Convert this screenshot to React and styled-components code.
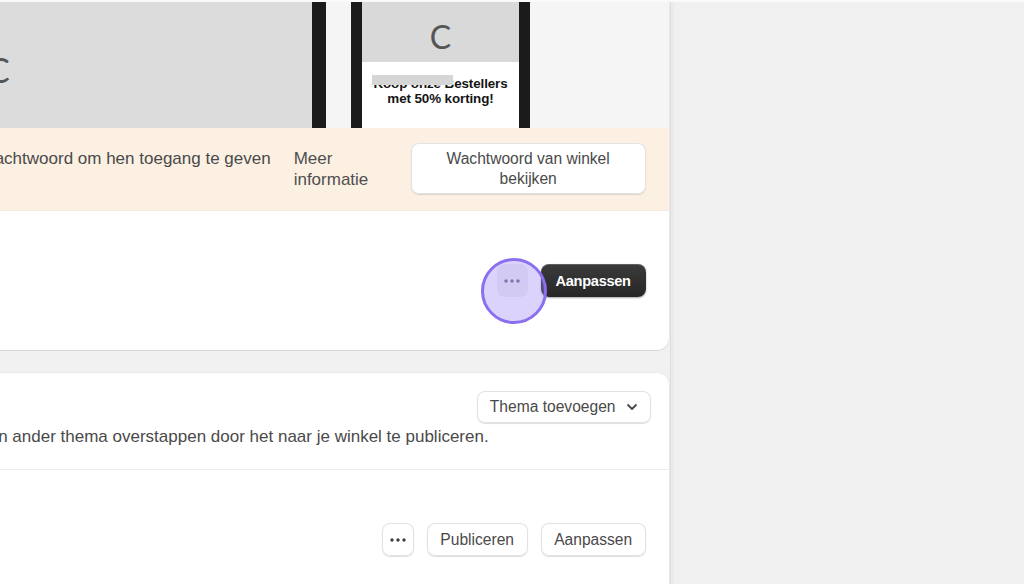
import React from 'react';
import styled, { createGlobalStyle } from 'styled-components';

const GlobalStyle = createGlobalStyle`
  html, body {
    margin: 0;
    padding: 0;
    background: #f1f1f1;
    font-family: "Liberation Sans", Arial, sans-serif;
    overflow: hidden;
  }
  * { box-sizing: border-box; }
`;

const Shell = styled.div`
  display: flex;
  height: 100vh;
  border-top: 2px solid #fafafa;
  overflow: hidden;
`;

// the page is scrolled sideways, so the column starts left of the viewport
const Main = styled.main`
  flex: 0 0 808px;
  margin-left: -139px;
  padding-right: 1px;
  display: flex;
  flex-direction: column;
  gap: 23px;
`;

const Rule = styled.div`
  flex: 0 0 1px;
  background: #dddddd;
`;

const Rest = styled.div`
  flex: 1;
  background: #f0f0f0;
  border-left: 3px solid #ebebeb;
`;

const Card = styled.section`
  background: #fff;
  border-radius: ${p => (p.$flatTop ? '0 0 12px 12px' : '12px')};
  box-shadow: 0 1px 0 rgba(26, 26, 26, 0.08), 0 0 0 1px rgba(0, 0, 0, 0.03);
  overflow: hidden;
  flex-shrink: 0;
`;

/* preview with desktop + phone mockups */
const Preview = styled.div`
  height: 126px;
  background: #f5f5f5;
  display: flex;
  padding-left: 20px;
  gap: 25px;
`;

const Desktop = styled.div`
  width: 445px;
  display: flex;
`;

const DesktopScreen = styled.div`
  flex: 1;
  background: #dcdcdc;
  display: flex;
  align-items: center;
  padding: 10px 0 0 106px;
`;

const DesktopFrame = styled.div`
  width: 14px;
  background: #1b1b1b;
`;

const LogoC = styled.span`
  font-family: Lato, "Open Sans", sans-serif;
  font-weight: 400;
  font-size: ${p => p.$size}px;
  line-height: 1;
  color: #555555;
`;

const Phone = styled.div`
  width: 179px;
  border-left: 11px solid #1b1b1b;
  border-right: 11px solid #1b1b1b;
  display: flex;
  flex-direction: column;
`;

const PhoneTop = styled.div`
  height: 60px;
  padding-top: 10px;
  background: #d9d9d9;
  display: flex;
  align-items: center;
  justify-content: center;
`;

const PhoneBody = styled.div`
  flex: 1;
  background: #fff;
  padding-top: 14px;
  position: relative;
`;

const Promo = styled.div`
  font-weight: 700;
  font-size: 13.4px;
  line-height: 15px;
  color: #151515;
  text-align: center;
  letter-spacing: -0.1px;
`;

const Redact = styled.div`
  position: absolute;
  left: 10px;
  top: 13px;
  width: 81px;
  height: 10px;
  background: #d6d6d6;
  filter: blur(0.6px);
`;

/* password banner */
const Banner = styled.div`
  background: #fcf0e3;
  padding: 15px 23px 16px 25px;
  border-bottom: 1px solid #f3e8dc;
  display: flex;
  align-items: center;
`;

const BannerText = styled.p`
  flex: 1;
  margin: 0;
  font-size: 17px;
  line-height: 21px;
  color: #4a4a4a;
  white-space: nowrap;
`;

const MoreLink = styled.a`
  width: 95px;
  margin-left: 23px;
  margin-right: 22px;
  font-size: 17px;
  line-height: 21px;
  color: #4f4f4f;
`;

const Button = styled.button`
  height: ${p => p.$h || 33}px;
  width: ${p => p.$w}px;
  padding: 0;
  border: 0;
  border-radius: 8px;
  background: #fff;
  box-shadow: inset 0 0 0 1px #e2e2e2, 0 1px 1px rgba(0, 0, 0, 0.13);
  font-family: "Liberation Sans", Arial, sans-serif;
  font-size: 15.6px;
  line-height: 20px;
  color: #4a4a4a;
  display: flex;
  align-items: center;
  justify-content: center;
  gap: 10px;
  cursor: pointer;
`;

const WideButton = styled(Button)`
  padding: 0 30px;
  text-align: center;
`;

const DarkButton = styled(Button)`
  background: linear-gradient(#3b3b3b, #262626);
  color: #fff;
  font-weight: 700;
  font-size: 14.6px;
  letter-spacing: -0.3px;
  box-shadow: inset 0 1px 0 rgba(255, 255, 255, 0.18), 0 1px 2px rgba(0, 0, 0, 0.35);
`;

const GhostButton = styled(Button)`
  background: #f1f1f1;
  box-shadow: none;
  position: relative;
`;

const ClickRing = styled.span`
  position: absolute;
  left: -16px;
  top: -6px;
  width: 66px;
  height: 66px;
  border-radius: 50%;
  background: rgba(157, 133, 247, 0.36);
  border: 3px solid #8c6ff0;
  pointer-events: none;
`;

/* theme rows */
const ThemeRow = styled.div`
  height: 139px;
  display: flex;
  align-items: center;
  justify-content: space-between;
  padding: 0 23px 0 20px;
`;

const ThemeName = styled.div`
  font-size: 15px;
  font-weight: 700;
  color: #303030;
`;

const Actions = styled.div`
  display: flex;
  gap: 13px;
`;

const LibraryHeader = styled.div`
  padding: 18px 18px 22px 20px;
  border-bottom: 1px solid #ebebeb;
`;

const HeaderTop = styled.div`
  display: flex;
  align-items: center;
  justify-content: space-between;
`;

const Title = styled.h2`
  margin: 0;
  font-size: 16px;
  color: #303030;
`;

const Description = styled.p`
  margin: 4px 0 0;
  font-size: 17px;
  line-height: 20px;
  color: #4a4a4a;
  white-space: nowrap;
`;

const Dots = ({ color = '#3f3f3f' }) => (
  <svg width="16" height="4" viewBox="0 0 16 4">
    <circle cx="2" cy="2" r="1.7" fill={color} />
    <circle cx="8" cy="2" r="1.7" fill={color} />
    <circle cx="14" cy="2" r="1.7" fill={color} />
  </svg>
);

const Chevron = () => (
  <svg width="12" height="8" viewBox="0 0 12 8">
    <path d="M2 2l4 4 4-4" fill="none" stroke="#4a4a4a" strokeWidth="1.8" strokeLinecap="round" strokeLinejoin="round" />
  </svg>
);

export default function App() {
  return (
    <>
      <GlobalStyle />
      <Shell>
        <Main>
          <Card $flatTop>
            <Preview>
              <Desktop>
                <DesktopScreen>
                  <LogoC $size={34}>C</LogoC>
                </DesktopScreen>
                <DesktopFrame />
              </Desktop>
              <Phone>
                <PhoneTop>
                  <LogoC $size={32}>C</LogoC>
                </PhoneTop>
                <PhoneBody>
                  <Promo>
                    Koop onze Bestellers
                    <br />
                    met 50% korting!
                  </Promo>
                  <Redact />
                </PhoneBody>
              </Phone>
            </Preview>
            <Banner>
              <BannerText>
                Stuur ze het wachtwoord om hen toegang te geven
                <br />
                tot je winkel.
              </BannerText>
              <MoreLink>Meer informatie</MoreLink>
              <WideButton $w={235} $h={51}>Wachtwoord van winkel bekijken</WideButton>
            </Banner>
            <ThemeRow>
              <ThemeName>Dawn</ThemeName>
              <Actions>
                <GhostButton $w={31}>
                  <Dots color="#6a6a80" />
                  <ClickRing />
                </GhostButton>
                <DarkButton $w={105}>Aanpassen</DarkButton>
              </Actions>
            </ThemeRow>
          </Card>

          <Card>
            <LibraryHeader>
              <HeaderTop>
                <Title>Bibliotheek</Title>
                <Button $w={174} $h={32}>
                  Thema toevoegen <Chevron />
                </Button>
              </HeaderTop>
              <Description>
                Je kunt naar een ander thema overstappen door het naar je winkel te publiceren.
              </Description>
            </LibraryHeader>
            <ThemeRow>
              <ThemeName>Sense</ThemeName>
              <Actions>
                <Button $w={32}>
                  <Dots />
                </Button>
                <Button $w={101}>Publiceren</Button>
                <Button $w={105}>Aanpassen</Button>
              </Actions>
            </ThemeRow>
          </Card>
        </Main>
        <Rule />
        <Rest />
      </Shell>
    </>
  );
}
